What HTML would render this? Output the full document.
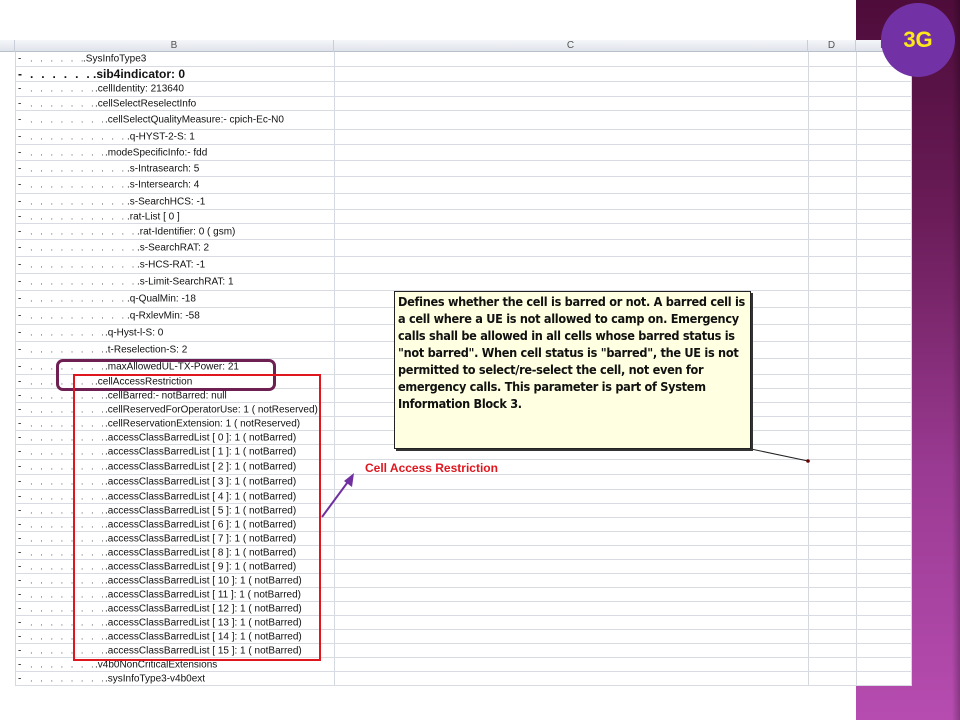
<!DOCTYPE html>
<html><head><meta charset="utf-8"><style>
*{margin:0;padding:0;box-sizing:border-box}
body{width:960px;height:720px;position:relative;overflow:hidden;background:#fff;font-family:"Liberation Sans",Arial,sans-serif}
#bar{position:absolute;left:856px;top:0;width:104px;height:720px;background:linear-gradient(#4e0c3a 0%,#6a1c58 30%,#9a3a92 65%,#b64cb0 100%)}
#bar:after{content:"";position:absolute;right:0;top:0;width:8px;height:100%;background:linear-gradient(90deg,rgba(0,0,0,0),rgba(0,0,0,.25))}
#sheet{position:absolute;left:0;top:40px;width:912px;height:646px;background:#fff;overflow:hidden}
#hdr{position:absolute;left:0;top:0;width:912px;height:12px;background:linear-gradient(#f4f6f9,#dfe3ea);border-bottom:1px solid #b8c0cc;font-size:10px;color:#555;}
#hdr span{position:absolute;top:0;text-align:center;line-height:12px;border-right:1px solid #c8ced8;height:12px}
.v{position:absolute;top:12px;width:1px;height:634px;background:#d4d8df}
.r{position:absolute;left:15px;width:897px;border-bottom:1px solid #d8dce2;font-size:10px;color:#111;white-space:nowrap}
.r b,.r i,.r em{position:absolute;font-style:normal;font-weight:normal;top:50%;transform:translateY(-50%)}
.r b{left:3px}
.r i{left:15px;letter-spacing:2.3px;color:#666}
.r em{background:#fff;padding-right:2px}
#circ{position:absolute;left:881px;top:3px;width:74px;height:74px;border-radius:50%;background:#7232a6;color:#ffe81a;font:bold 22px "Liberation Sans",sans-serif;text-align:center;line-height:74px}
#note{position:absolute;left:394px;top:291px;width:357px;height:158px;background:#ffffe1;border:1px solid #222;box-shadow:2px 2px 0 #333;font:bold 12.6px "DejaVu Sans Condensed","Liberation Sans",sans-serif;line-height:17px;padding:1px 3px;letter-spacing:-0.3px;color:#111}
</style></head><body>
<div id="bar"></div>
<div id="sheet">
<div id="hdr"><span style="left:0;width:15px"></span><span style="left:15px;width:319px">B</span><span style="left:334px;width:474px">C</span><span style="left:808px;width:48px">D</span><span style="left:856px;width:56px">E</span></div>
<div class="v" style="left:15px"></div><div class="v" style="left:334px"></div><div class="v" style="left:808px"></div><div class="v" style="left:856px"></div><div class="v" style="left:911px"></div>
<div style="position:absolute;left:0;top:12px">
<div class="r" style="top:0;height:15px"><b>-</b><i>. . . . . . .</i><em style="left:68px">.SysInfoType3</em></div>
<div class="r" style="top:15px;height:15px;font-weight:bold;font-size:12px"><b style="font-weight:bold">-</b><i style="color:#111;font-weight:bold">. . . . . . . .</i><em style="left:78px;font-weight:bold">.sib4indicator: 0</em></div>
<div class="r" style="top:30px;height:15px"><b>-</b><i>. . . . . . . .</i><em style="left:80px">.cellIdentity: 213640</em></div>
<div class="r" style="top:45px;height:14px"><b>-</b><i>. . . . . . . .</i><em style="left:80px">.cellSelectReselectInfo</em></div>
<div class="r" style="top:59px;height:19px"><b>-</b><i>. . . . . . . . .</i><em style="left:90px">.cellSelectQualityMeasure:- cpich-Ec-N0</em></div>
<div class="r" style="top:78px;height:15px"><b>-</b><i>. . . . . . . . . . .</i><em style="left:112px">.q-HYST-2-S: 1</em></div>
<div class="r" style="top:93px;height:16px"><b>-</b><i>. . . . . . . . .</i><em style="left:90px">.modeSpecificInfo:- fdd</em></div>
<div class="r" style="top:109px;height:16px"><b>-</b><i>. . . . . . . . . . .</i><em style="left:112px">.s-Intrasearch: 5</em></div>
<div class="r" style="top:125px;height:17px"><b>-</b><i>. . . . . . . . . . .</i><em style="left:112px">.s-Intersearch: 4</em></div>
<div class="r" style="top:142px;height:16px"><b>-</b><i>. . . . . . . . . . .</i><em style="left:112px">.s-SearchHCS: -1</em></div>
<div class="r" style="top:158px;height:14px"><b>-</b><i>. . . . . . . . . . .</i><em style="left:112px">.rat-List [ 0 ]</em></div>
<div class="r" style="top:172px;height:16px"><b>-</b><i>. . . . . . . . . . . .</i><em style="left:122px">.rat-Identifier: 0 ( gsm)</em></div>
<div class="r" style="top:188px;height:17px"><b>-</b><i>. . . . . . . . . . . .</i><em style="left:122px">.s-SearchRAT: 2</em></div>
<div class="r" style="top:205px;height:17px"><b>-</b><i>. . . . . . . . . . . .</i><em style="left:122px">.s-HCS-RAT: -1</em></div>
<div class="r" style="top:222px;height:17px"><b>-</b><i>. . . . . . . . . . . .</i><em style="left:122px">.s-Limit-SearchRAT: 1</em></div>
<div class="r" style="top:239px;height:17px"><b>-</b><i>. . . . . . . . . . .</i><em style="left:112px">.q-QualMin: -18</em></div>
<div class="r" style="top:256px;height:17px"><b>-</b><i>. . . . . . . . . . .</i><em style="left:112px">.q-RxlevMin: -58</em></div>
<div class="r" style="top:273px;height:17px"><b>-</b><i>. . . . . . . . .</i><em style="left:90px">.q-Hyst-l-S: 0</em></div>
<div class="r" style="top:290px;height:17px"><b>-</b><i>. . . . . . . . .</i><em style="left:90px">.t-Reselection-S: 2</em></div>
<div class="r" style="top:307px;height:16px"><b>-</b><i>. . . . . . . . .</i><em style="left:90px">.maxAllowedUL-TX-Power: 21</em></div>
<div class="r" style="top:323px;height:14px"><b>-</b><i>. . . . . . . .</i><em style="left:80px">.cellAccessRestriction</em></div>
<div class="r" style="top:337px;height:14px"><b>-</b><i>. . . . . . . . .</i><em style="left:90px">.cellBarred:- notBarred: null</em></div>
<div class="r" style="top:351px;height:14px"><b>-</b><i>. . . . . . . . .</i><em style="left:90px">.cellReservedForOperatorUse: 1 ( notReserved)</em></div>
<div class="r" style="top:365px;height:14px"><b>-</b><i>. . . . . . . . .</i><em style="left:90px">.cellReservationExtension: 1 ( notReserved)</em></div>
<div class="r" style="top:379px;height:14px"><b>-</b><i>. . . . . . . . .</i><em style="left:90px">.accessClassBarredList [ 0 ]: 1 ( notBarred)</em></div>
<div class="r" style="top:393px;height:15px"><b>-</b><i>. . . . . . . . .</i><em style="left:90px">.accessClassBarredList [ 1 ]: 1 ( notBarred)</em></div>
<div class="r" style="top:408px;height:15px"><b>-</b><i>. . . . . . . . .</i><em style="left:90px">.accessClassBarredList [ 2 ]: 1 ( notBarred)</em></div>
<div class="r" style="top:423px;height:15px"><b>-</b><i>. . . . . . . . .</i><em style="left:90px">.accessClassBarredList [ 3 ]: 1 ( notBarred)</em></div>
<div class="r" style="top:438px;height:14px"><b>-</b><i>. . . . . . . . .</i><em style="left:90px">.accessClassBarredList [ 4 ]: 1 ( notBarred)</em></div>
<div class="r" style="top:452px;height:14px"><b>-</b><i>. . . . . . . . .</i><em style="left:90px">.accessClassBarredList [ 5 ]: 1 ( notBarred)</em></div>
<div class="r" style="top:466px;height:14px"><b>-</b><i>. . . . . . . . .</i><em style="left:90px">.accessClassBarredList [ 6 ]: 1 ( notBarred)</em></div>
<div class="r" style="top:480px;height:14px"><b>-</b><i>. . . . . . . . .</i><em style="left:90px">.accessClassBarredList [ 7 ]: 1 ( notBarred)</em></div>
<div class="r" style="top:494px;height:14px"><b>-</b><i>. . . . . . . . .</i><em style="left:90px">.accessClassBarredList [ 8 ]: 1 ( notBarred)</em></div>
<div class="r" style="top:508px;height:14px"><b>-</b><i>. . . . . . . . .</i><em style="left:90px">.accessClassBarredList [ 9 ]: 1 ( notBarred)</em></div>
<div class="r" style="top:522px;height:14px"><b>-</b><i>. . . . . . . . .</i><em style="left:90px">.accessClassBarredList [ 10 ]: 1 ( notBarred)</em></div>
<div class="r" style="top:536px;height:14px"><b>-</b><i>. . . . . . . . .</i><em style="left:90px">.accessClassBarredList [ 11 ]: 1 ( notBarred)</em></div>
<div class="r" style="top:550px;height:14px"><b>-</b><i>. . . . . . . . .</i><em style="left:90px">.accessClassBarredList [ 12 ]: 1 ( notBarred)</em></div>
<div class="r" style="top:564px;height:14px"><b>-</b><i>. . . . . . . . .</i><em style="left:90px">.accessClassBarredList [ 13 ]: 1 ( notBarred)</em></div>
<div class="r" style="top:578px;height:14px"><b>-</b><i>. . . . . . . . .</i><em style="left:90px">.accessClassBarredList [ 14 ]: 1 ( notBarred)</em></div>
<div class="r" style="top:592px;height:14px"><b>-</b><i>. . . . . . . . .</i><em style="left:90px">.accessClassBarredList [ 15 ]: 1 ( notBarred)</em></div>
<div class="r" style="top:606px;height:14px"><b>-</b><i>. . . . . . . .</i><em style="left:80px">.v4b0NonCriticalExtensions</em></div>
<div class="r" style="top:620px;height:14px"><b>-</b><i>. . . . . . . . .</i><em style="left:90px">.sysInfoType3-v4b0ext</em></div>
</div>
</div>
<div id="circ">3G</div>
<div style="position:absolute;left:56px;top:359px;width:220px;height:32px;border:3px solid #6e2052;border-radius:7px"></div>
<div style="position:absolute;left:73px;top:374px;width:248px;height:287px;border:2px solid #e0161e"></div>
<svg style="position:absolute;left:0;top:0" width="960" height="720"><line x1="322" y1="517" x2="350" y2="479" stroke="#7030a0" stroke-width="2"/><polygon points="354,473 352,487 344,481" fill="#7030a0"/><line x1="751" y1="449" x2="808" y2="461" stroke="#222" stroke-width="1"/><circle cx="808" cy="461" r="1.8" fill="#600"/></svg>
<div style="position:absolute;left:365px;top:461px;font:bold 12px 'Liberation Sans',sans-serif;color:#e0161e">Cell Access Restriction</div>
<div id="note">Defines whether the cell is barred or not. A barred cell is<br>a cell where a UE is not allowed to camp on. Emergency<br>calls shall be allowed in all cells whose barred status is<br>"not barred". When cell status is "barred", the UE is not<br>permitted to select/re-select the cell, not even for<br>emergency calls. This parameter is part of System<br>Information Block 3.</div>
</body></html>
